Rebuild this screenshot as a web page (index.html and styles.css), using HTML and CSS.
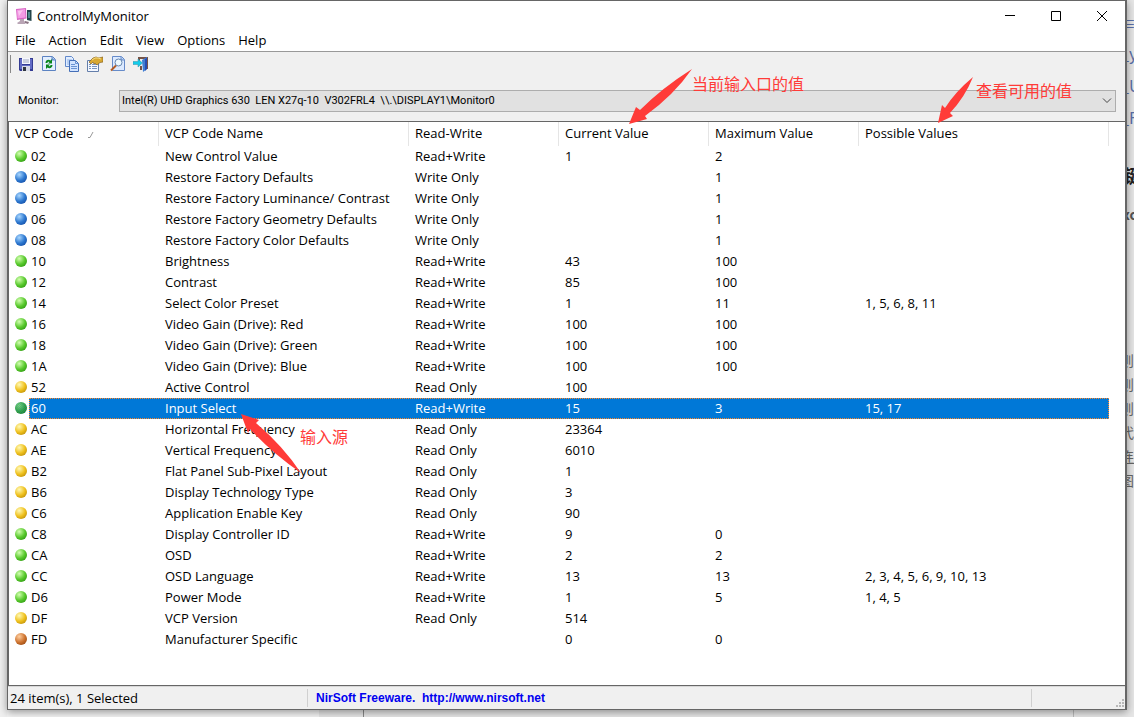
FILE: index.html
```html
<!DOCTYPE html>
<html lang="en">
<head>
<meta charset="utf-8">
<title>ControlMyMonitor</title>
<link rel="stylesheet" href="styles.css">
</head>
<body>
<div class="backdrop" aria-hidden="true">
  <span class="patch p1"></span><span class="patch p2"></span><span class="patch p3"></span><span class="patch p4"></span>
  <span class="bt blue" style="top:11px">≡</span>
  <span class="bt blue" style="top:41px">_y</span>
  <span class="bt blue" style="top:73px">_U</span>
  <span class="bt blue" style="top:105px">_F</span>
  <span class="bt bold" style="top:163px">键</span>
  <span class="bt bold small" style="top:202px">xc</span>
  <span class="bt" style="top:348px">则</span>
  <span class="bt" style="top:372px">则</span>
  <span class="bt" style="top:396px">则</span>
  <span class="bt" style="top:420px">代</span>
  <span class="bt" style="top:444px"><u>连</u></span>
  <span class="bt" style="top:468px">图</span>
</div>
<main class="window">
  <header class="titlebar">
    <svg class="app-icon" width="16" height="16" viewBox="0 0 16 16"><path d="M11 2h4.500v11l-4.500-1z" fill="#22434a"/><path d="M12.500 4h1v6h-1z" fill="#7fd6cf"/><path d="M0 1 10 0l.5 10.500L1 12z" fill="#d765c4"/><path d="m1 2 8-1 .5 8.500-8 1z" fill="#f49be4"/><path d="m2 3 5-1-4 6z" fill="#fac5f1"/><path d="M4 11h4v2l2 1-1 2H2l-1-1 3-2z" fill="#b9a5b5"/><path d="m9 13 4 1-1 2-3-1z" fill="#8b7584"/></svg>
    <h1 class="title">ControlMyMonitor</h1>
    <div class="controls">
      <button aria-label="Minimize"><svg width="12" height="12"><path d="M1 5.500h10" stroke="#000"/></svg></button>
      <button aria-label="Maximize"><svg width="12" height="12"><path d="M1.500 1.500h9v9h-9z" fill="none" stroke="#000"/></svg></button>
      <button aria-label="Close"><svg width="12" height="12"><path d="m1 1 10 10M11 1 1 11" stroke="#000"/></svg></button>
    </div>
  </header>
  <nav class="menu"><button>File</button><button>Action</button><button>Edit</button><button>View</button><button>Options</button><button>Help</button></nav>
  <div class="toolbar">
    <span class="grip"></span>
    <button aria-label="Save"><svg width="16" height="16" viewBox="0 0 16 16"><path d="M1 2h14v13H2l-1-1z" fill="#343c93"/><path d="M2 3h2v6h8V3h2v10H2z" fill="#626bc5"/><path d="M4 2h8v6H4z" fill="#f5f7ff"/><path d="M5 4h6M5 6h6" stroke="#9da5bc"/><path d="M4 10h8v5H4z" fill="#d7dbe8"/><path d="M5 11h3v4H5z" fill="#303540"/></svg></button>
    <button aria-label="Refresh"><svg width="16" height="16" viewBox="0 0 16 16"><path d="M1.500.5h10l3 3v11h-13z" fill="#e3efff" stroke="#5c83c2"/><path d="M11 1v3h3" fill="#87aee4" stroke="#5c83c2"/><path d="M4.500 7c0-3 3-4 5-2.500L11 3v4.500H7L8.500 6C7 5.500 6.500 6 6.500 7zM11.500 9c0 3-3 4-5 2.500L5 13V8.500h4L7.500 10c1.500.5 2 0 2-1z" fill="#08851c"/></svg></button>
    <button aria-label="Copy"><svg width="16" height="16" viewBox="0 0 16 16"><path d="M1.500.5h6l2 2v8h-8z" fill="#e1edff" stroke="#6289ca"/><path d="M3 4h5M3 6h5M3 8h4" stroke="#8eb2e7"/><path d="M5.500 4.500h6l3 3v8h-9z" fill="#d2e4ff" stroke="#456fb7"/><path d="M11.500 4v3.500h3M7 8.500h4M7 10.500h6M7 12.500h6" fill="none" stroke="#6993d3"/></svg></button>
    <button aria-label="Properties"><svg width="16" height="16" viewBox="0 0 16 16"><path d="M.5 4.500h11v11H.5z" fill="#f3f7ff" stroke="#647eaa"/><path d="M2 8.500h2m1 0h5M2 10.500h2m1 0h5M2 12.500h2m1 0h5" stroke="#7994bd"/><path d="m2 6 4-4 3-1 3 1 4-1v5l-3 .5L10 9 8 7 7 8 6 6 4 8z" fill="#d8a832" stroke="#886321" stroke-width=".7"/><path d="m5 4 3-2h3l3 1" fill="none" stroke="#f8df82"/></svg></button>
    <button aria-label="Find"><svg width="16" height="16" viewBox="0 0 16 16"><path d="M2.500.5h9l3 3v11h-12z" fill="#dceaff" stroke="#668bc9"/><path d="M11 1v3h3" fill="#a8c6ee" stroke="#668bc9"/><circle cx="8.500" cy="6.500" r="3.500" fill="#edf9ff" stroke="#6686af"/><path d="m6 9.500-5 5" stroke="#b35c25" stroke-width="2"/></svg></button>
    <button aria-label="Exit"><svg width="16" height="16" viewBox="0 0 16 16"><path d="M5 1h10v12h-2V3H7v2H5zM7 10h2v4H7z" fill="#755346"/><path d="m9 4 5-3v12l-4 3z" fill="#407fd4"/><path d="m12 3 2-1v11l-2 2z" fill="#274db1"/><path d="M0 5.500h5V3l4.500 4L5 11V8.500H0z" fill="#13cce9" stroke="#348ca9" stroke-width=".5"/></svg></button>
  </div>
  <div class="monitor">
    <label for="mon">Monitor:</label>
    <div class="combo"><select id="mon"><option>Intel(R) UHD Graphics 630 &nbsp;LEN X27q-10 &nbsp;V302FRL4 &nbsp;\\.\DISPLAY1\Monitor0</option></select><svg class="chev" width="10" height="6"><path d="m1 .5 4 4 4-4" fill="none" stroke="#444"/></svg></div>
  </div>
  <section class="list">
    <table>
      <colgroup><col class="n"><col class="w"><col class="n"><col class="n"><col class="n"><col class="w"></colgroup>
      <thead><tr><th>VCP Code<svg class="sort" width="6" height="6"><path d="M0 5.500h2L5 0" fill="none" stroke="#999"/></svg></th><th>VCP Code Name</th><th>Read-Write</th><th>Current Value</th><th>Maximum Value</th><th>Possible Values</th></tr></thead>
      <tbody>
<tr><td><i class="g"></i>02</td><td>New Control Value</td><td>Read+Write</td><td>1</td><td>2</td><td></td></tr>
<tr><td><i class="b"></i>04</td><td>Restore Factory Defaults</td><td>Write Only</td><td></td><td>1</td><td></td></tr>
<tr><td><i class="b"></i>05</td><td>Restore Factory Luminance/ Contrast</td><td>Write Only</td><td></td><td>1</td><td></td></tr>
<tr><td><i class="b"></i>06</td><td>Restore Factory Geometry Defaults</td><td>Write Only</td><td></td><td>1</td><td></td></tr>
<tr><td><i class="b"></i>08</td><td>Restore Factory Color Defaults</td><td>Write Only</td><td></td><td>1</td><td></td></tr>
<tr><td><i class="g"></i>10</td><td>Brightness</td><td>Read+Write</td><td>43</td><td>100</td><td></td></tr>
<tr><td><i class="g"></i>12</td><td>Contrast</td><td>Read+Write</td><td>85</td><td>100</td><td></td></tr>
<tr><td><i class="g"></i>14</td><td>Select Color Preset</td><td>Read+Write</td><td>1</td><td>11</td><td>1, 5, 6, 8, 11</td></tr>
<tr><td><i class="g"></i>16</td><td>Video Gain (Drive): Red</td><td>Read+Write</td><td>100</td><td>100</td><td></td></tr>
<tr><td><i class="g"></i>18</td><td>Video Gain (Drive): Green</td><td>Read+Write</td><td>100</td><td>100</td><td></td></tr>
<tr><td><i class="g"></i>1A</td><td>Video Gain (Drive): Blue</td><td>Read+Write</td><td>100</td><td>100</td><td></td></tr>
<tr><td><i class="y"></i>52</td><td>Active Control</td><td>Read Only</td><td>100</td><td></td><td></td></tr>
<tr class="sel"><td><i class="g"></i>60</td><td>Input Select</td><td>Read+Write</td><td>15</td><td>3</td><td>15, 17</td></tr>
<tr><td><i class="y"></i>AC</td><td>Horizontal Frequency</td><td>Read Only</td><td>23364</td><td></td><td></td></tr>
<tr><td><i class="y"></i>AE</td><td>Vertical Frequency</td><td>Read Only</td><td>6010</td><td></td><td></td></tr>
<tr><td><i class="y"></i>B2</td><td>Flat Panel Sub-Pixel Layout</td><td>Read Only</td><td>1</td><td></td><td></td></tr>
<tr><td><i class="y"></i>B6</td><td>Display Technology Type</td><td>Read Only</td><td>3</td><td></td><td></td></tr>
<tr><td><i class="y"></i>C6</td><td>Application Enable Key</td><td>Read Only</td><td>90</td><td></td><td></td></tr>
<tr><td><i class="g"></i>C8</td><td>Display Controller ID</td><td>Read+Write</td><td>9</td><td>0</td><td></td></tr>
<tr><td><i class="g"></i>CA</td><td>OSD</td><td>Read+Write</td><td>2</td><td>2</td><td></td></tr>
<tr><td><i class="g"></i>CC</td><td>OSD Language</td><td>Read+Write</td><td>13</td><td>13</td><td>2, 3, 4, 5, 6, 9, 10, 13</td></tr>
<tr><td><i class="g"></i>D6</td><td>Power Mode</td><td>Read+Write</td><td>1</td><td>5</td><td>1, 4, 5</td></tr>
<tr><td><i class="y"></i>DF</td><td>VCP Version</td><td>Read Only</td><td>514</td><td></td><td></td></tr>
<tr><td><i class="o"></i>FD</td><td>Manufacturer Specific</td><td></td><td>0</td><td>0</td><td></td></tr>
      </tbody>
    </table>
  </section>
  <footer class="status">
    <span class="count">24 item(s), 1 Selected</span>
    <a href="http://www.nirsoft.net">NirSoft Freeware. &nbsp;http://www.nirsoft.net</a>
    <span class="size"><svg width="8" height="8" fill="#b8b8b8"><path d="M6 0h2v2H6zM3 3h2v2H3zM6 3h2v2H6zM0 6h2v2H0zM3 6h2v2H3zM6 6h2v2H6z"/></svg></span>
  </footer>
</main>
<svg class="arrows" width="1134" height="717" fill="#ff3b38" aria-hidden="true"><path d="m629 124 7-17 4 3q22-22 52-41-18 26-47 47l2 3z"/><path d="m938 123 4-18 3 3q10-16 28-31-8 20-23 36l3 3z"/><path d="m241 414 18 6-3 3q27 23 45 50-29-20-51-44l-2 4z"/></svg>
<span class="note n1">当前输入口的值</span>
<span class="note n2">查看可用的值</span>
<span class="note n3">输入源</span>
</body>
</html>
```
FILE: styles.css
```css
* { box-sizing: border-box; }
body { margin: 0; padding: 0 7px 7px; min-height: 100vh; display: flex; background: #e6e6e6; color: #000; font: 13px/18px "Open Sans", "Noto Sans CJK SC", sans-serif; position: relative; overflow: hidden; }
button { border: 0; padding: 0; background: none; font: inherit; color: inherit; display: flex; align-items: center; justify-content: center; }
.window { flex: 1; position: relative; display: flex; flex-direction: column; background: #f0f0f0; border: 1px solid #666; border-right-width: 2px; box-shadow: 0 2px 8px #0006; }
.titlebar { height: 29px; display: flex; align-items: center; background: #fff; padding-left: 8px; }
.title { font-size: 13px; font-weight: 400; margin: 0 auto 0 5px; }
.controls { display: flex; }
.controls button { width: 46px; height: 28px; }
.menu { height: 22px; display: flex; align-items: center; gap: 13px; padding: 0 7px 2px; background: #fff; border-bottom: 1px solid #999; }
.toolbar { height: 27px; display: flex; align-items: center; gap: 7px; padding: 0 0 3px 2px; }
.grip { width: 1px; height: 18px; background: #888; }
.toolbar button { width: 16px; height: 16px; }
.monitor { display: flex; align-items: center; padding: 11px 9px 9px 10px; font: 11px/18px Roboto, sans-serif; }
.monitor label { width: 101px; }
.combo { flex: 1; position: relative; display: flex; }
.combo select { flex: 1; height: 22px; appearance: none; border: 1px solid #adadad; border-radius: 0; background: #e1e1e1; padding: 0 2px; font: inherit; color: #000; }
.chev { position: absolute; right: 4px; top: 8px; }
.list { flex: 1; background: #fff; border: 1px solid #666; border-right: 0; }
table { table-layout: fixed; width: 1100px; border-collapse: separate; border-spacing: 0; }
.n { width: 150px; }
.w { width: 250px; }
th { height: 24px; padding: 0 6px 3px; text-align: left; font-weight: 400; border-right: 1px solid #e5e5e5; }
td { height: 21px; padding: 0 6px 1px; white-space: nowrap; }
.sort { margin-left: 15px; }
td i { display: inline-block; width: 12px; height: 12px; border-radius: 50%; margin-right: 4px; vertical-align: -1px; }
.g { background: radial-gradient(circle at 35% 30%, #d2ffb0, #58c92c 50%, #1d8607); }
.b { background: radial-gradient(circle at 35% 30%, #a9d7ff, #2d78d0 50%, #063a94); }
.y { background: radial-gradient(circle at 35% 30%, #fff9b5, #efc11d 50%, #a97900); }
.o { background: radial-gradient(circle at 35% 30%, #ffcfa0, #ce7430 50%, #813400); }
.sel { position: relative; color: #fff; }
.sel td { background: #0078d7; }
.sel td:first-child { background: linear-gradient(to right, #fff 20px, #0078d7 20px); }
.sel td:first-child::after { content: ""; position: absolute; inset: 0 0 0 20px; border: 1px dotted #ff8728; }
.sel .g { background: repeating-conic-gradient(#0078d766 0 25%, transparent 0 50%) 0 0 / 2px 2px, radial-gradient(circle at 35% 30%, #8ee070, #3ca82c 50%, #17700a); }
.status { height: 23px; display: flex; align-items: center; border-top: 1px solid #d7d7d7; padding-left: 2px; }
.count { width: 298px; border-right: 1px solid #d0d0d0; }
.status a { flex: 1; padding-left: 8px; color: #0000f0; font: bold 12px/18px "Liberation Sans", sans-serif; text-decoration: none; border-right: 1px solid #d0d0d0; }
.size { width: 93px; height: 18px; display: flex; align-items: flex-end; justify-content: flex-end; padding-right: 1px; }
.arrows { position: absolute; left: 0; top: 0; }
.note { position: absolute; color: #ff3b38; font: 16px/20px "Noto Sans CJK SC", sans-serif; }
.n1 { left: 692px; top: 73px; }
.n2 { left: 976px; top: 80px; }
.n3 { left: 300px; top: 426px; }
.backdrop { position: absolute; inset: 0; overflow: hidden; }
.bt { position: absolute; left: 1120px; color: #666; font: 14px/24px "Noto Sans CJK SC", sans-serif; white-space: nowrap; }
.blue { color: #596fa8; font-size: 16px; }
.bold { left: 1124px; font-weight: 700; font-size: 18px; color: #222; }
.small { left: 1122px; font-size: 14px; color: #555; }
.patch { position: absolute; }
.p1 { left: 0; bottom: 0; width: 319px; height: 7px; background: #f4f4f4; }
.p2 { left: 363px; bottom: 0; width: 1px; height: 7px; background: #888; }
.p3 { left: 1073px; bottom: 0; width: 1px; height: 7px; background: #bbb; }
.p4 { left: 0; top: 0; bottom: 0; width: 7px; background: #f0f0f0; }
```
